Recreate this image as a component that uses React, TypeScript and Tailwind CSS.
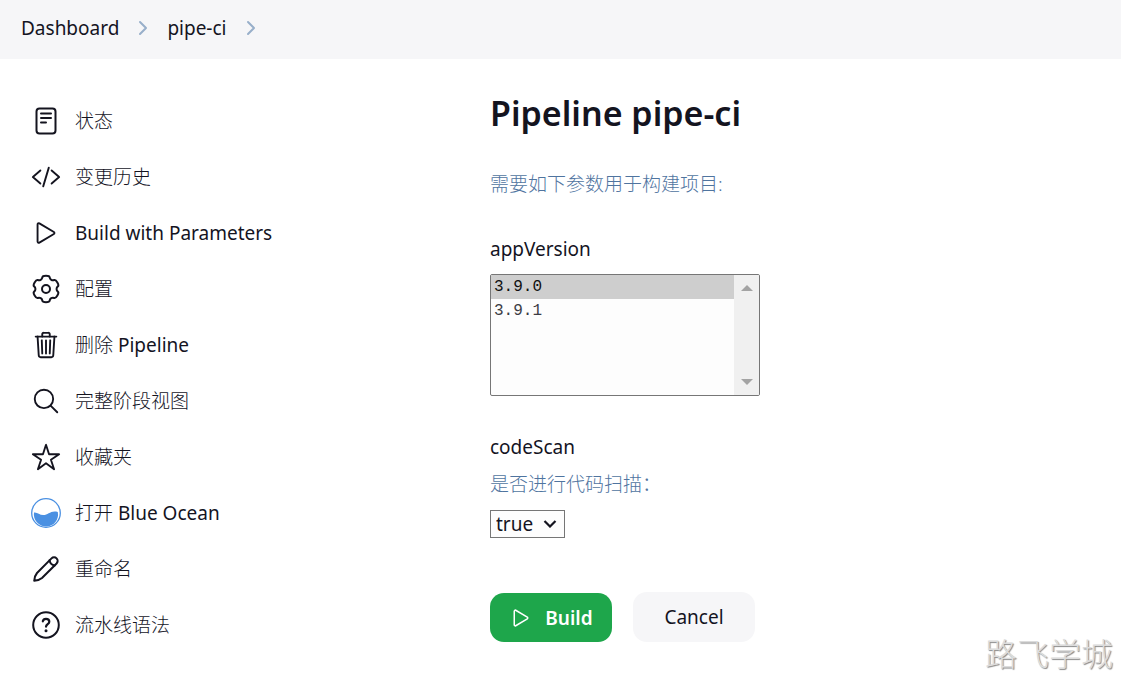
import type { ReactNode } from "react";
import {
  IoCodeSlashOutline,
  IoPlayOutline,
  IoSearchOutline,
  IoStarOutline,
  IoTrashOutline,
} from "react-icons/io5";

function StatusIcon() {
  return (
    <svg viewBox="0 0 30 30" className="size-[30px]" fill="none" stroke="currentColor" strokeWidth="2" strokeLinecap="round" aria-hidden="true">
      <rect x="5.5" y="2.5" width="19" height="25" rx="3" />
      <path d="M10 7.5h10M10 12h10M10 16.5h5" />
    </svg>
  );
}

// Six rounded teeth: each corner is the control point of a curve between edge midpoints.
function gearPath() {
  const corners: [number, number][] = [];
  for (let tooth = 0; tooth < 6; tooth++) {
    for (const [offset, radius] of [[-15, 13.6], [15, 13.6], [21, 10.7], [39, 10.7]]) {
      const angle = ((tooth * 60 + offset - 90) * Math.PI) / 180;
      corners.push([15 + radius * Math.cos(angle), 15 + radius * Math.sin(angle)]);
    }
  }
  const mid = (i: number) => {
    const a = corners[i % corners.length];
    const b = corners[(i + 1) % corners.length];
    return `${(a[0] + b[0]) / 2} ${(a[1] + b[1]) / 2}`;
  };
  return `M${mid(corners.length - 1)}` + corners.map(([x, y], i) => `Q${x} ${y} ${mid(i)}`).join("") + "z";
}

function GearIcon() {
  return (
    <svg viewBox="0 0 30 30" className="size-[30px]" fill="none" stroke="currentColor" strokeWidth="2" strokeLinejoin="round" aria-hidden="true">
      <path d={gearPath()} />
      <circle cx="15" cy="15" r="4" />
    </svg>
  );
}

function OceanIcon() {
  return (
    <svg viewBox="0 0 30 30" className="size-[30px]" aria-hidden="true">
      <circle cx="15" cy="15" r="14.300" fill="#fff" stroke="#4a90e2" strokeWidth="1.300" />
      <path d="M3 14.500c3.500-.6 5.500 2.800 9.500 2.600 4.500-.2 7.500-5.300 14.300-3.200A12.100 12.100 0 1 1 3 14.500z" fill="#4a90e2" />
    </svg>
  );
}

function PencilIcon() {
  return (
    <svg viewBox="0 0 30 30" className="size-[30px]" fill="none" stroke="currentColor" strokeWidth="2" strokeLinecap="round" strokeLinejoin="round" aria-hidden="true">
      <path d="M3.200 26.800Q3.500 22 6 19L20.500 4.400a3.500 3.500 0 0 1 5.100 5.100L11 24Q8 26.500 3.200 26.800z" />
      <path d="M18.600 6.300c.4 2.700 2.400 4.700 5.100 5.100" />
    </svg>
  );
}

function HelpIcon() {
  return (
    <svg viewBox="0 0 30 30" className="size-[30px]" fill="none" stroke="currentColor" strokeLinecap="round" strokeLinejoin="round" aria-hidden="true">
      <circle cx="15" cy="15" r="12.800" strokeWidth="2" />
      <path d="M11.800 11.300c.3-1.600 1.500-2.500 3.200-2.500 1.900 0 3.300 1.200 3.300 2.900 0 2.500-3.100 2.500-3.300 5" strokeWidth="2.200" />
      <circle cx="15" cy="20.800" r="1.500" fill="currentColor" stroke="none" />
    </svg>
  );
}

function Crumb({ children }: { children: ReactNode }) {
  return (
    <li className="flex items-center">
      <a href="#">{children}</a>
      <svg viewBox="0 0 10 16" className="mx-[19px] h-4 w-[10px]" fill="none" stroke="#98afca" strokeWidth="2" strokeLinecap="round" strokeLinejoin="round" aria-hidden="true">
        <path d="M2 2l6 6-6 6" />
      </svg>
    </li>
  );
}

const tasks: { icon: ReactNode; zh?: string; en?: string }[] = [
  { icon: <StatusIcon />, zh: "状态" },
  { icon: <IoCodeSlashOutline className="size-[30px]" />, zh: "变更历史" },
  { icon: <IoPlayOutline className="size-[30px]" />, en: "Build with Parameters" },
  { icon: <GearIcon />, zh: "配置" },
  { icon: <IoTrashOutline className="size-[30px]" />, zh: "删除", en: "Pipeline" },
  { icon: <IoSearchOutline className="size-[30px]" />, zh: "完整阶段视图" },
  { icon: <IoStarOutline className="size-[30px]" />, zh: "收藏夹" },
  { icon: <OceanIcon />, zh: "打开", en: "Blue Ocean" },
  { icon: <PencilIcon />, zh: "重命名" },
  { icon: <HelpIcon />, zh: "流水线语法" },
];

export default function App() {
  return (
    <div className="relative min-h-screen bg-white font-['Noto_Sans','Noto_Sans_CJK_SC',sans-serif] text-[19px] leading-7 text-[#14141f]">
      <nav aria-label="Breadcrumb" className="bg-[#f6f6f8] px-[21px] pt-[14px] pb-[17px]">
        <ol className="flex h-7 items-center">
          <Crumb>Dashboard</Crumb>
          <Crumb>pipe-ci</Crumb>
        </ol>
      </nav>

      <div className="flex">
        <aside className="w-[460px] shrink-0 pt-[34px] pl-[31px]">
          <ul>
            {tasks.map((task, index) => (
              <li key={index}>
                <a href="#" className="flex h-14 items-center gap-[14px]">
                  {task.icon}
                  <span>
                    {task.zh && <span className="font-light">{task.zh}</span>}
                    {task.zh && task.en && " "}
                    {task.en}
                  </span>
                </a>
              </li>
            ))}
          </ul>
        </aside>

        <main className="min-w-0 flex-1 pt-[31px] pl-[30px]">
          <h1 className="text-[34px] leading-[46px] font-semibold">Pipeline pipe-ci</h1>
          <p className="mt-[34px] font-light text-[#4f749f]">需要如下参数用于构建项目:</p>

          <form onSubmit={(e) => e.preventDefault()}>
            <label htmlFor="app-version" className="mt-[37px] block">appVersion</label>
            <div className="mt-[11px] flex h-[122px] w-[270px] overflow-hidden rounded-xs border border-[#767676] bg-[#fdfdfd]">
              <select
                id="app-version"
                size={5}
                defaultValue="3.9.0"
                className="h-full min-w-0 flex-1 appearance-none overflow-hidden font-['Liberation_Mono',monospace] text-[16px] text-[#3c3c44] outline-none"
              >
                <option value="3.9.0" className="h-6 min-h-6 px-[3px] pt-[3px] pb-0">3.9.0</option>
                <option value="3.9.1" className="h-6 min-h-6 px-[3px] pt-[3px] pb-0">3.9.1</option>
              </select>
              <div aria-hidden="true" className="flex w-[25px] flex-col items-center justify-between bg-[#f0f0f0] py-[10px] text-[#a3a3a3]">
                <svg viewBox="0 0 12 6" className="h-[6px] w-3" fill="currentColor"><path d="M0 6l6-6 6 6z" /></svg>
                <svg viewBox="0 0 12 6" className="h-[6px] w-3" fill="currentColor"><path d="M0 0l6 6 6-6z" /></svg>
              </div>
            </div>

            <label htmlFor="code-scan" className="mt-[37px] block">codeScan</label>
            <p className="mt-[9px] font-light text-[#4f749f]">是否进行代码扫描：</p>
            <div className="mt-3 grid w-[75px] items-center">
              <select
                id="code-scan"
                defaultValue="true"
                className="col-start-1 row-start-1 h-7 w-full appearance-none border border-[#767676] bg-[#fdfdfd] pl-[5px] leading-[26px]"
              >
                <option>true</option>
                <option>false</option>
              </select>
              <svg viewBox="0 0 14 8" className="pointer-events-none col-start-1 row-start-1 mr-2 h-2 w-[14px] justify-self-end" fill="none" stroke="currentColor" strokeWidth="2.200" aria-hidden="true">
                <path d="M1.500 1l5.500 5.500L12.500 1" />
              </svg>
            </div>

            <div className="mt-[54px] flex items-end gap-[21px]">
              <button type="submit" className="flex h-[49px] w-[122px] items-center justify-center gap-3 rounded-[14px] bg-[#1ea64b] font-semibold text-white">
                <IoPlayOutline className="size-6" />
                Build
              </button>
              <button type="button" className="h-[50px] w-[122px] rounded-[14px] bg-[#f6f6f8]">Cancel</button>
            </div>
          </form>
        </main>
      </div>

      <div className="pointer-events-none absolute right-2 bottom-[7px] font-['Noto_Sans_CJK_SC',sans-serif] text-[32px] leading-10 font-light text-[#dcdcdc] [text-shadow:1px_1px_1px_#888]">
        路飞学城
      </div>
    </div>
  );
}
